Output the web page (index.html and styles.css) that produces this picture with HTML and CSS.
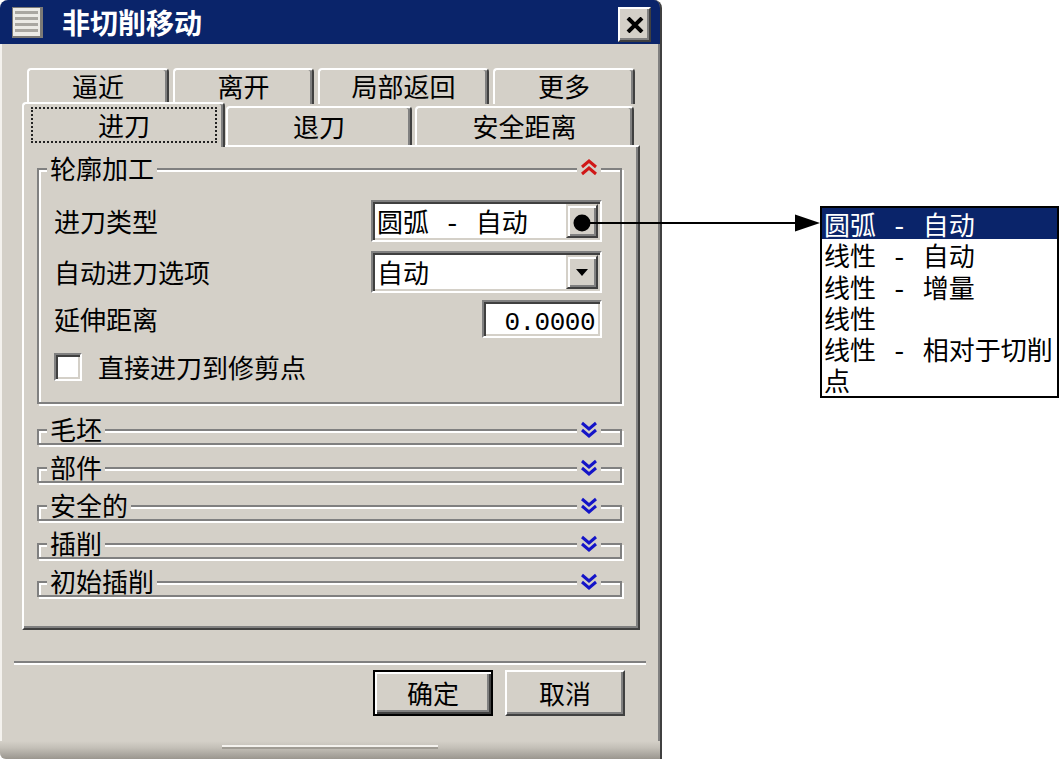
FILE: index.html
```html
<!DOCTYPE html>
<html>
<head>
  <meta charset="utf-8">
  <title>非切削移动</title>
  <link rel="stylesheet" href="styles.css">
</head>
<body>
  <div class="page">
    <div class="dialog">
      <div class="titlebar">
        <svg class="title-icon" viewBox="0 0 31 31">
          <rect x="0" y="0" width="31" height="31" fill="#7c7a76"/>
          <rect x="1" y="1" width="27" height="28" fill="#ecebe6"/>
          <g fill="#a9a7a1">
            <rect x="3" y="4" width="23" height="3"/>
            <rect x="3" y="10" width="23" height="3"/>
            <rect x="3" y="16" width="23" height="3"/>
            <rect x="3" y="22" width="23" height="3"/>
          </g>
        </svg>
        <span class="title">非切削移动</span>
        <div class="close-btn">
          <svg width="18" height="16" viewBox="0 0 18 16">
            <path d="M2 1 L16 15 M16 1 L2 15" stroke="#000" stroke-width="4"/>
          </svg>
        </div>
      </div>

      <div class="dialog-body">
        <div class="tabs">
          <div class="tab-row tab-row-back">
            <div class="tab">逼近</div>
            <div class="tab">离开</div>
            <div class="tab">局部返回</div>
            <div class="tab">更多</div>
          </div>
          <div class="tab-row tab-row-front">
            <div class="tab tab-active"><span class="focus">进刀</span></div>
            <div class="tab">退刀</div>
            <div class="tab">安全距离</div>
          </div>
        </div>

        <div class="panel">
          <div class="group">
            <div class="group-head">
              <span class="group-label">轮廓加工</span>
              <span class="toggle">
                <svg width="20" height="20" viewBox="0 0 20 20">
                  <path d="M3 9 L10 3 L17 9 M3 16 L10 10 L17 16" fill="none" stroke="#d01818" stroke-width="3"/>
                </svg>
              </span>
            </div>
            <div class="field-row">
              <span>进刀类型</span>
              <div class="combo">
                <span class="combo-text">圆弧<span class="latin"> - </span>自动</span>
                <span class="combo-btn"></span>
              </div>
            </div>
            <div class="field-row field-row-tight">
              <span>自动进刀选项</span>
              <div class="combo">
                <span class="combo-text">自动</span>
                <span class="combo-btn"><span class="caret"></span></span>
              </div>
            </div>
            <div class="field-row field-row-number">
              <span>延伸距离</span>
              <div class="number-input"><span class="latin">0.0000</span></div>
            </div>
            <div class="check-row">
              <span class="checkbox"></span>
              <span class="check-label">直接进刀到修剪点</span>
            </div>
          </div>

          <div class="group group-collapsed">
            <div class="group-head">
              <span class="group-label">毛坯</span>
              <span class="toggle"><svg width="20" height="20" viewBox="0 0 20 20"><path d="M3 4 L10 10 L17 4 M3 11 L10 17 L17 11" fill="none" stroke="#1414c8" stroke-width="3"/></svg></span>
            </div>
          </div>
          <div class="group group-collapsed">
            <div class="group-head">
              <span class="group-label">部件</span>
              <span class="toggle"><svg width="20" height="20" viewBox="0 0 20 20"><path d="M3 4 L10 10 L17 4 M3 11 L10 17 L17 11" fill="none" stroke="#1414c8" stroke-width="3"/></svg></span>
            </div>
          </div>
          <div class="group group-collapsed">
            <div class="group-head">
              <span class="group-label">安全的</span>
              <span class="toggle"><svg width="20" height="20" viewBox="0 0 20 20"><path d="M3 4 L10 10 L17 4 M3 11 L10 17 L17 11" fill="none" stroke="#1414c8" stroke-width="3"/></svg></span>
            </div>
          </div>
          <div class="group group-collapsed">
            <div class="group-head">
              <span class="group-label">插削</span>
              <span class="toggle"><svg width="20" height="20" viewBox="0 0 20 20"><path d="M3 4 L10 10 L17 4 M3 11 L10 17 L17 11" fill="none" stroke="#1414c8" stroke-width="3"/></svg></span>
            </div>
          </div>
          <div class="group group-collapsed">
            <div class="group-head">
              <span class="group-label">初始插削</span>
              <span class="toggle"><svg width="20" height="20" viewBox="0 0 20 20"><path d="M3 4 L10 10 L17 4 M3 11 L10 17 L17 11" fill="none" stroke="#1414c8" stroke-width="3"/></svg></span>
            </div>
          </div>
        </div>

        <div class="separator"></div>

        <div class="actions">
          <div class="btn btn-default">确定</div>
          <div class="btn">取消</div>
        </div>

        <div class="dialog-foot"><div class="grip"></div></div>
      </div>
    </div>

    <div class="callout">
      <ul class="listbox">
        <li class="selected">圆弧<span class="latin"> - </span>自动</li>
        <li>线性<span class="latin"> - </span>自动</li>
        <li>线性<span class="latin"> - </span>增量</li>
        <li>线性</li>
        <li>线性<span class="latin"> - </span>相对于切削点</li>
      </ul>
    </div>

    <svg class="pointer" width="250" height="22" viewBox="0 0 250 22">
      <circle cx="10" cy="11" r="8.5" fill="#000"/>
      <line x1="16" y1="11" x2="226" y2="11" stroke="#000" stroke-width="2.2"/>
      <polygon points="223,2.5 248,11 223,19.5" fill="#000"/>
    </svg>
  </div>
</body>
</html>
```

FILE: styles.css
```css
/* Reset and base styles */
* {
  margin: 0;
  padding: 0;
  box-sizing: border-box;
}

body {
  width: 1060px;
  height: 759px;
  overflow: hidden;
  background-color: #ffffff;
  color: #000000;
  font-family: "Noto Sans CJK SC", sans-serif;
  font-size: 26px;
  line-height: 30px;
}

/* half-width glyphs: spaces, dashes, digits */
.latin {
  font-family: "Liberation Mono", monospace;
  line-height: 0;
  white-space: pre;
}

.page {
  position: relative;
  display: flex;
  align-items: flex-start;
}

/* Classic window frame */
.dialog {
  flex: none;
  width: 662px;
  height: 759px;
  display: flex;
  flex-direction: column;
  background-color: #d4d0c8;
  border-right: 2px solid #404040;
  border-radius: 8px 8px 0 6px;
  box-shadow: inset 2px 0 #f4f2ee, inset -2px 0 #808080;
  overflow: hidden;
}

.titlebar {
  flex: none;
  height: 44px;
  display: flex;
  align-items: flex-start;
  padding: 0 9px 0 12px;
  background-color: #0a246a;
}

.title-icon {
  width: 31px;
  height: 31px;
  margin-top: 7px;
}

.title {
  margin-left: 19px;
  color: #ffffff;
  font-size: 28px;
  font-weight: 700;
  line-height: 44px;
}

.close-btn {
  margin: 7px 0 0 auto;
  width: 33px;
  height: 35px;
  display: flex;
  align-items: center;
  justify-content: center;
  background-color: #d4d0c8;
  border: 2px solid;
  border-color: #ffffff #404040 #404040 #ffffff;
  box-shadow: inset -2px -2px #808080;
}

.dialog-body {
  flex: 1;
  display: flex;
  flex-direction: column;
  padding-top: 24px;
}

/* Tabs */
.tab-row {
  display: flex;
  align-items: flex-start;
}

.tab-row-back {
  gap: 4px;
  margin-left: 27px;
  height: 36px;
}

.tab-row-front {
  gap: 3px;
  margin: 2px 0 0 24px;
  height: 39px;
}

.tab {
  flex: none;
  height: 100%;
  text-align: center;
  line-height: 32px;
  background-color: #d4d0c8;
  border: 2px solid #ffffff;
  border-bottom: none;
  border-right-color: #404040;
  border-radius: 4px 4px 0 0;
  box-shadow: inset -2px 0 #808080;
}

.tab-row-front .tab {
  line-height: 36px;
}

.tab-row-back .tab:nth-child(1) { width: 142px; }
.tab-row-back .tab:nth-child(2) { width: 141px; }
.tab-row-back .tab:nth-child(3) { width: 171px; }
.tab-row-back .tab:nth-child(4) { width: 142px; }

.tab-row-front .tab:nth-child(1) { width: 199px; }
.tab-row-front .tab:nth-child(2) { width: 186px; }
.tab-row-front .tab:nth-child(3) { width: 219px; }

.tab-row-front .tab.tab-active {
  position: relative;
  z-index: 1;
  width: 203px;
  height: 45px;
  margin: -4px -2px -2px;
}

.focus {
  display: block;
  height: 36px;
  margin: 3px 6px 0 7px;
  border: 2px dotted #222222;
  line-height: 32px;
}

/* Tab page */
.panel {
  margin-left: 22px;
  width: 618px;
  height: 485px;
  padding: 21px 16px 0 13px;
  border: 2px solid #ffffff;
  border-right-color: #404040;
  border-bottom-color: #404040;
  box-shadow: inset -2px -2px #808080;
}

/* Etched group boxes */
.group {
  padding: 0 18px 20px 15px;
  border: 2px solid #808080;
  box-shadow: inset 2px 2px #ffffff, 2px 2px #ffffff;
}

.group-head {
  display: flex;
  align-items: center;
  justify-content: space-between;
  height: 26px;
  margin: -15px 1px 0 -7px;
}

.group-label {
  padding: 0 3px;
  line-height: 26px;
  background-color: #d4d0c8;
}

.toggle {
  width: 24px;
  height: 26px;
  display: flex;
  align-items: center;
  justify-content: center;
  background-color: #d4d0c8;
}

.group-collapsed {
  height: 16px;
  padding-bottom: 0;
  margin-top: 25px;
}

.group-collapsed + .group-collapsed {
  margin-top: 22px;
}

.field-row {
  display: flex;
  align-items: center;
  justify-content: space-between;
  margin-top: 19px;
}

.field-row-tight {
  margin-top: 9px;
}

.field-row-number {
  margin-top: 7px;
}

/* Sunken inputs */
.combo,
.number-input,
.checkbox {
  background-color: #ffffff;
  border: 2px solid;
  border-color: #808080 #ffffff #ffffff #808080;
  box-shadow: inset 2px 2px #404040, inset -2px -2px #d4d0c8;
}

.combo {
  width: 231px;
  height: 42px;
  display: flex;
  padding: 2px;
}

.combo-text {
  flex: 1;
  padding-left: 2px;
  line-height: 34px;
}

.combo-btn {
  width: 32px;
  height: 34px;
  display: flex;
  align-items: center;
  justify-content: center;
  background-color: #d4d0c8;
  border: 2px solid;
  border-color: #d4d0c8 #404040 #404040 #d4d0c8;
  box-shadow: inset 2px 2px #ffffff, inset -2px -2px #808080;
}

.caret {
  width: 0;
  height: 0;
  border-left: 6px solid transparent;
  border-right: 6px solid transparent;
  border-top: 7px solid #000000;
}

.number-input {
  width: 120px;
  height: 38px;
  padding-right: 5px;
  text-align: right;
  line-height: 34px;
  letter-spacing: -0.5px;
}

.check-row {
  display: flex;
  align-items: center;
  margin-top: 14px;
}

.checkbox {
  width: 28px;
  height: 28px;
}

.check-label {
  margin-left: 16px;
}

/* Footer */
.separator {
  margin: 31px 14px 0;
  border-top: 2px solid #808080;
  border-bottom: 2px solid #ffffff;
}

.actions {
  display: flex;
  justify-content: flex-end;
  gap: 12px;
  margin-top: 5px;
  padding-right: 35px;
}

.btn {
  width: 120px;
  height: 46px;
  text-align: center;
  line-height: 42px;
  background-color: #d4d0c8;
  border: 2px solid;
  border-color: #ffffff #404040 #404040 #ffffff;
  box-shadow: inset -2px -2px #808080;
}

.btn-default {
  border-color: #000000;
  box-shadow: inset 2px 2px #ffffff, inset -2px -2px #404040, inset -4px -4px #808080;
}

.dialog-foot {
  margin-top: auto;
  height: 18px;
  display: flex;
  justify-content: center;
  padding-top: 4px;
  background: linear-gradient(#d4d0c8, #c2beb6 40%, #9a968f);
}

.grip {
  width: 216px;
  height: 4px;
  border-top: 2px solid #f4f2ee;
  border-bottom: 2px solid #a09c94;
}

/* Expanded dropdown list and pointer */
.callout {
  margin: 206px 0 0 158px;
}

.listbox {
  width: 239px;
  list-style: none;
  background-color: #ffffff;
  border: 2px solid #000000;
}

.listbox li {
  padding-left: 2px;
  line-height: 31.3px;
}

.listbox li.selected {
  background-color: #0a246a;
  color: #ffffff;
}

.pointer {
  position: absolute;
  left: 572px;
  top: 212px;
}
```
